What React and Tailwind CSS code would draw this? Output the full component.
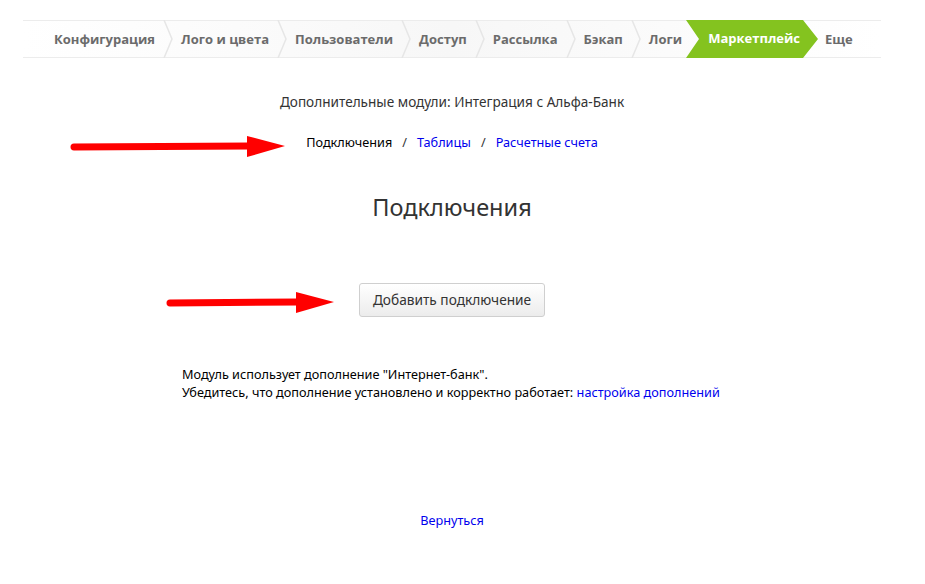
import React from "react";

const tabs = [
  "Конфигурация",
  "Лого и цвета",
  "Пользователи",
  "Доступ",
  "Рассылка",
  "Бэкап",
  "Логи",
  "Маркетплейс",
  "Еще",
];

const Chevron = () => (
  <svg width="10" height="38" viewBox="0 0 10 38" className="shrink-0">
    <path d="M1 0 L9 19 L1 38" fill="none" stroke="#e6e6e6" strokeWidth="1.5" />
  </svg>
);

const RedArrow = ({ length }) => (
  <svg width={length + 36} height="22" viewBox={`0 0 ${length + 36} 22`}>
    <line x1="4" y1="11" x2={length} y2="10" stroke="#ff0000" strokeWidth="7" strokeLinecap="round" />
    <polygon points={`${length - 2},0 ${length + 36},10 ${length - 2},21`} fill="#ff0000" />
  </svg>
);

const Nav = () => (
  <div className="mx-[23px] mt-[20px] h-[38px] flex items-center border-y border-[#ececec] bg-gradient-to-r from-white via-[#f7f7f7] to-white font-['Open_Sans',sans-serif] font-bold text-[13px] text-[#6b6b6b] pl-[31px]">
    {tabs.map((t, i) => {
      const active = t === "Маркетплейс";
      const next = tabs[i + 1] === "Маркетплейс";
      if (active) {
        return (
          <div key={t} className="relative h-[38px] flex items-center -ml-[8px]">
            <svg width="133" height="38" viewBox="0 0 133 38" className="absolute left-0 top-0">
              <polygon points="0,0 117,0 132,19 117,38 0,38 13,19" fill="#84c31f" />
            </svg>
            <span className="relative text-white pl-[22px] pr-[17px]">{t}</span>
          </div>
        );
      }
      return (
        <React.Fragment key={t}>
          <span className={`whitespace-nowrap pt-[1px] ${i === 0 ? "" : "pl-[8px]"} ${i === tabs.length - 1 ? "" : "pr-[8px]"}`}>{t}</span>
          {i < tabs.length - 1 && !next && <Chevron />}
          {next && <span className="w-[4px]" />}
        </React.Fragment>
      );
    })}
  </div>
);

export default function App() {
  return (
    <div className="w-[904px] min-h-[584px] bg-white font-['Noto_Sans',sans-serif] text-[13px] text-[#333]">
      <Nav />
      <div className="flex flex-col items-center">
        <div className="mt-[34px] text-[13.6px] text-[#333]">
          Дополнительные модули: Интеграция с Альфа-Банк
        </div>
        <div className="mt-[18px] w-full relative flex justify-center items-center h-[24px]">
          <div className="absolute left-[70px] top-[6px]">
            <RedArrow length={179} />
          </div>
          <div className="flex items-center gap-[10px] text-[12.7px]">
            <span className="text-black">Подключения</span>
            <span className="text-[#333]">/</span>
            <a href="#" className="text-[#0000ee]">Таблицы</a>
            <span className="text-[#333]">/</span>
            <a href="#" className="text-[#0000ee]">Расчетные счета</a>
          </div>
        </div>
        <h1 className="mt-[38px] text-[23.5px] text-[#333] leading-[30px]">Подключения</h1>
        <div className="mt-[61px] w-full relative flex justify-center">
          <div className="absolute left-[166px] top-[9px]">
            <RedArrow length={132} />
          </div>
          <button className="h-[34px] px-[13px] rounded-[3px] border border-[#cfcfcf] bg-gradient-to-b from-white to-[#ececec] text-[13.7px] text-[#333]">
            Добавить подключение
          </button>
        </div>
        <div className="mt-[48px] w-[540px] text-[12.7px] leading-[18px] text-black">
          <div>Модуль использует дополнение "Интернет-банк".</div>
          <div>
            Убедитесь, что дополнение установлено и корректно работает:{" "}
            <a href="#" className="text-[#0000ee]">настройка дополнений</a>
          </div>
        </div>
        <a href="#" className="mt-[110px] text-[12.7px] text-[#0000ee]">Вернуться</a>
      </div>
    </div>
  );
}
